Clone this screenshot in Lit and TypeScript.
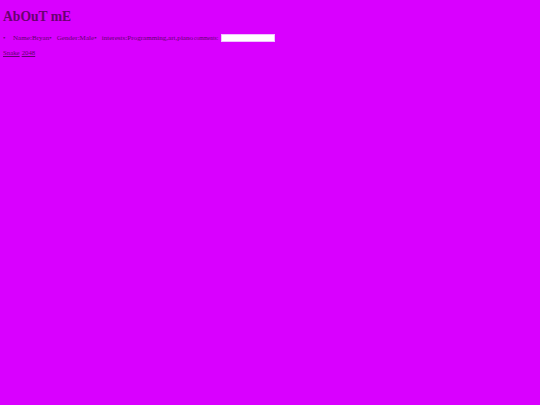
import { LitElement, html, css } from "lit";
import { customElement } from "lit/decorators.js";

@customElement("app-root")
export class AppRoot extends LitElement {
  static styles = css`
    :host { display: block; width: 540px; height: 405px; background: #d900ff; color: #64006e; font-family: "Liberation Serif", serif; font-size: 7.1px; overflow: hidden; }
    .page { display: flex; flex-direction: column; padding: 9px 3px 0; }
    h1 { margin: 0; font-size: 13.6px; line-height: 16px; font-weight: bold; color: #6a0070; }
    ul { list-style: none; margin: 8px 0 0; padding: 0; display: flex; align-items: center; height: 10px; }
    li { display: flex; align-items: center; }
    li::before { content: "•"; width: 7.5px; flex: none; }
    .first::before { width: 10px; }
    .small { font-size: 5.5px; margin-left: 1px; }
    .input { width: 52px; height: 6px; margin-left: 3px; background: #fff; border: 1px solid #f0c0ff; }
    .links { margin-top: 6px; display: flex; gap: 2px; font-size: 6.8px; }
    a { color: #64006e; text-decoration: underline; }
  `;
  render() {
    return html`<div class="page">
      <h1>AbOuT mE</h1>
      <ul>
        <li class="first">Name:Bryan</li>
        <li>Gender:Male</li>
        <li>interests:Programming,art,piano<span class="small">comments:</span><span class="input"></span></li>
      </ul>
      <div class="links"><a href="#">Snake</a><a href="#">2048</a></div>
    </div>`;
  }
}
